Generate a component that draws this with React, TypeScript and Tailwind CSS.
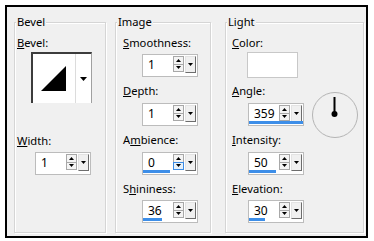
import React from "react";

function Up() {
  return (
    <svg width="5" height="3" viewBox="0 0 5 3">
      <path d="M2.5 0L5 3H0z" fill="#000" />
    </svg>
  );
}
function Down({ w = 5, h = 3 }: { w?: number; h?: number }) {
  return (
    <svg width={w} height={h} viewBox={`0 0 ${w} ${h}`}>
      <path d={`M0 0H${w}L${w / 2} ${h}z`} fill="#000" />
    </svg>
  );
}

function Spin({ value, frac, hl }: { value: string; frac?: number; hl?: boolean }) {
  return (
    <div className="relative w-[56px] h-[23px] bg-white border border-[#bcbcbc] flex items-start pl-[5px] pr-[1px]">
      <span className="flex-1 text-[12px] leading-[20px] text-black">{value}</span>
      <div className="flex items-start gap-[1px] pt-[1px]">
        <div className="w-[11px] h-[16px] flex flex-col border border-[#a8a8a8] bg-[#f4f4f4]">
          <div className="flex-1 flex items-center justify-center border-b border-[#a8a8a8]">
            <Up />
          </div>
          <div
            className={
              hl
                ? "flex-1 flex items-center justify-center bg-[#e5f1fb] outline outline-1 outline-[#3c8ce6]"
                : "flex-1 flex items-center justify-center"
            }
          >
            <Down />
          </div>
        </div>
        <div className="w-[11px] h-[17px] bg-[#f0f0f0] border border-t-[#e3e3e3] border-l-[#e3e3e3] border-r-[#6d6d6d] border-b-[#6d6d6d] flex items-center justify-center">
          <Down />
        </div>
      </div>
      {frac !== undefined && (
        <div
          className="absolute left-0 bottom-[1px] h-[3px] bg-[#3d8ee8]"
          style={{ width: `${frac * 100}%` }}
        />
      )}
    </div>
  );
}

function Group({ title, w, children }: { title: string; w: string; children: React.ReactNode }) {
  return (
    <div
      className={
        "relative h-[211px] border border-[#d5d5d5] shadow-[inset_1px_1px_0_#fff,1px_1px_0_#fff] flex flex-col items-start " +
        w
      }
    >
      <div className="absolute top-[-8px] left-[1px] px-[1px] bg-[#f0f0f0] leading-[14px]">{title}</div>
      {children}
    </div>
  );
}

function Label({ children, cls }: { children: React.ReactNode; cls: string }) {
  return <div className={"leading-[16px] h-[16px] whitespace-nowrap " + cls}>{children}</div>;
}

export default function App() {
  return (
    <div className="w-[374px] h-[241px] bg-white pl-[5px] pt-[5px] font-['Noto_Sans',sans-serif] text-[11.2px] text-black">
      <div className="w-[363px] h-[233px] border-2 border-black bg-[#f0f0f0] flex items-start pl-[7px] pt-[15px]">
        <Group title="Bevel" w="w-[92px]">
          <Label cls="ml-[2px] mt-[12px]">
            <span className="underline">B</span>evel:
          </Label>
          <div className="ml-[16px] mt-[1px] w-[61px] h-[51px] bg-white border-t-2 border-l-2 border-t-[#3c3c3c] border-l-[#3c3c3c] border-r border-r-[#a0a0a0] flex">
            <div className="w-[42px] h-full">
              <svg width="42" height="49" viewBox="0 0 42 49">
                <polygon points="8,37 33,12 33,37" fill="#000" />
              </svg>
            </div>
            <div className="w-px h-full bg-[#dcdcdc]" />
            <div className="flex-1 flex items-center justify-center">
              <Down w={7} h={4} />
            </div>
          </div>
          <Label cls="ml-[2px] mt-[30px]">
            <span className="underline">W</span>idth:
          </Label>
          <div className="ml-[20px] mt-[3px]">
            <Spin value="1" />
          </div>
        </Group>

        <div className="w-[9px]" />

        <Group title="Image" w="w-[96px]">
          <Label cls="ml-[7px] mt-[12px]">
            <span className="underline">S</span>moothness:
          </Label>
          <div className="ml-[26px] mt-[3px]">
            <Spin value="1" />
          </div>
          <Label cls="ml-[7px] mt-[6px]">
            <span className="underline">D</span>epth:
          </Label>
          <div className="ml-[26px] mt-[4px]">
            <Spin value="1" />
          </div>
          <Label cls="ml-[7px] mt-[6px]">
            A<span className="underline">m</span>bience:
          </Label>
          <div className="ml-[26px] mt-[4px]">
            <Spin value="0" frac={0.5} hl />
          </div>
          <Label cls="ml-[7px] mt-[6px]">
            S<span className="underline">h</span>ininess:
          </Label>
          <div className="ml-[26px] mt-[3px]">
            <Spin value="36" frac={0.36} />
          </div>
        </Group>

        <div className="w-[14px]" />

        <Group title="Light" w="w-[139px]">
          <Label cls="ml-[6px] mt-[12px]">
            <span className="underline">C</span>olor:
          </Label>
          <div className="ml-[21px] mt-[1px] w-[51px] h-[26px] bg-white border border-[#c8c8c8]" />
          <div className="flex items-start mt-[5px]">
            <div className="flex flex-col items-start">
              <Label cls="ml-[6px]">
                <span className="underline">A</span>ngle:
              </Label>
              <div className="ml-[22px] mt-[4px]">
                <Spin value="359" frac={1} />
              </div>
            </div>
            <div className="ml-[8px] mt-[9px] mb-[-12px]">
              <svg width="46" height="46" viewBox="0 0 46 46">
                <circle cx="23" cy="23" r="22.5" fill="none" stroke="#b4b4b4" strokeWidth="1" />
                <line x1="22.5" y1="5" x2="22.5" y2="22" stroke="#000" strokeWidth="2" />
                <circle cx="22.5" cy="22" r="3" fill="#000" />
              </svg>
            </div>
          </div>
          <Label cls="ml-[6px] mt-[6px]">
            <span className="underline">I</span>ntensity:
          </Label>
          <div className="ml-[22px] mt-[4px]">
            <Spin value="50" frac={0.5} />
          </div>
          <Label cls="ml-[6px] mt-[6px]">
            <span className="underline">E</span>levation:
          </Label>
          <div className="ml-[22px] mt-[3px]">
            <Spin value="30" frac={0.3} />
          </div>
        </Group>
      </div>
    </div>
  );
}
